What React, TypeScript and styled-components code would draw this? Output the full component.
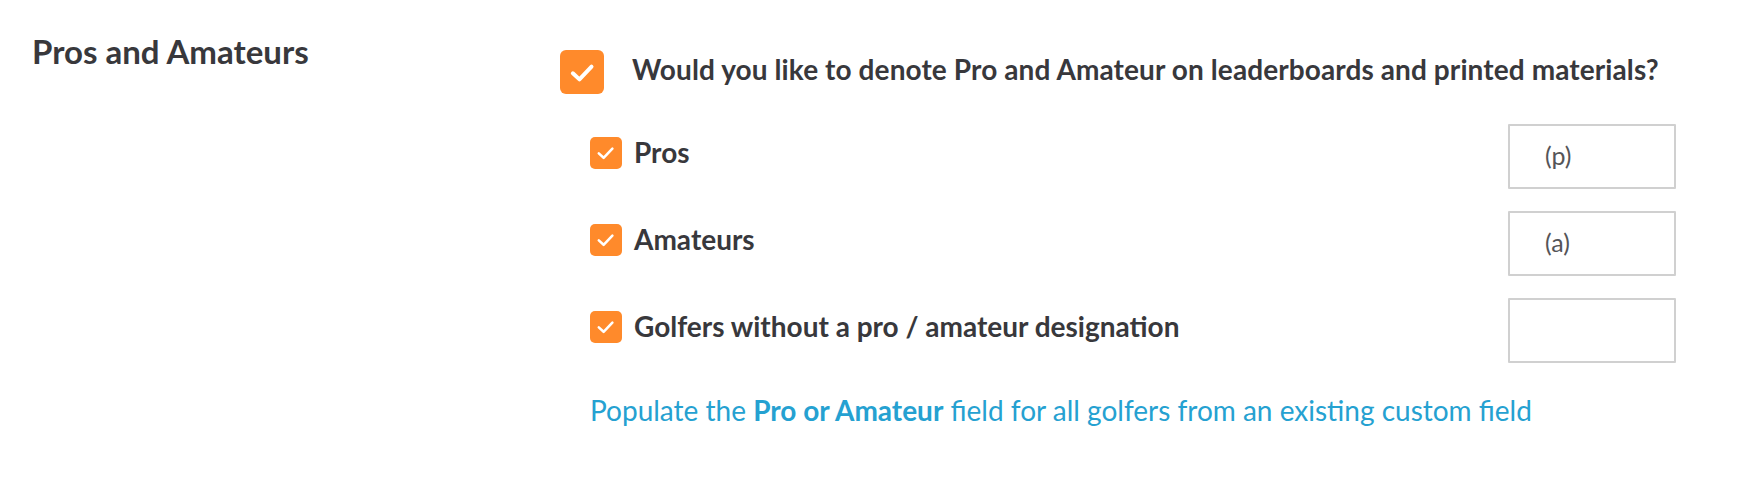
import React from "react"
import styled, { createGlobalStyle } from "styled-components"

const GlobalStyle = createGlobalStyle`
  body {
    margin: 0;
    background: #ffffff;
    font-family: Lato, "Liberation Sans", sans-serif;
    color: #38383c;
  }
`

const Section = styled.div`
  display: flex;
  padding: 24px 0 0 32px;
  width: 1744px;
  height: 484px;
  box-sizing: border-box;
`

const SideTitle = styled.h2`
  width: 528px;
  margin: 0;
  font-size: 33px;
  font-weight: 700;
  line-height: 54px;
`

const Content = styled.div`
  width: 1116px;
  display: flex;
  flex-direction: column;
`

const QuestionRow = styled.div`
  display: flex;
  align-items: center;
  gap: 28px;
  margin-top: 26px;
`

const QuestionText = styled.div`
  font-size: 28px;
  font-weight: 700;
  line-height: 34px;
  letter-spacing: 0.1px;
  margin-top: -7px;
`

const Options = styled.div`
  display: flex;
  flex-direction: column;
  gap: 22px;
  margin-top: 30px;
  padding-left: 30px;
`

const OptionRow = styled.div`
  display: flex;
  align-items: center;
  height: 65px;
`

const OptionLabel = styled.div`
  flex: 1;
  margin-left: 12px;
  font-size: 28px;
  font-weight: 700;
  line-height: 34px;
  margin-top: -10px;
`

const Box = styled.span<{ size: number }>`
  width: ${({ size }) => size}px;
  height: ${({ size }) => size}px;
  border-radius: ${({ size }) => (size > 40 ? 6 : 5)}px;
  background: #ff8a2b;
  display: flex;
  align-items: center;
  justify-content: center;
  flex-shrink: 0;
  margin-top: ${({ size }) => (size > 40 ? 0 : -8)}px;
`

const AbbrevInput = styled.input`
  width: 168px;
  height: 65px;
  box-sizing: border-box;
  border: 2px solid #d0d0d0;
  border-radius: 1px;
  padding: 0 0 4px 35px;
  font-family: Lato, "Liberation Sans", sans-serif;
  font-size: 25px;
  color: #555558;
  background: #fff;
  outline: none;
`

const PopulateLink = styled.a`
  display: block;
  margin-top: 30px;
  padding-left: 30px;
  font-size: 28px;
  line-height: 34px;
  color: #25a1d1;
  text-decoration: none;
  cursor: pointer;

  strong {
    font-weight: 700;
  }
`

const Check: React.FC<{ size: number }> = ({ size }) => (
  <Box size={size}>
    <svg
      width={size * 0.6}
      height={size * 0.6}
      viewBox="0 0 24 24"
      fill="none"
      stroke="#ffffff"
      strokeWidth={size > 40 ? 3.6 : 3.2}
      strokeLinecap="round"
      strokeLinejoin="round"
    >
      <path d="M3.5 13 L9.5 18.5 L20.5 7" />
    </svg>
  </Box>
)

const options = [
  { label: "Pros", value: "(p)" },
  { label: "Amateurs", value: "(a)" },
  { label: "Golfers without a pro / amateur designation", value: "" },
]

export default function App() {
  return (
    <>
      <GlobalStyle />
      <Section>
        <SideTitle>Pros and Amateurs</SideTitle>
        <Content>
          <QuestionRow>
            <Check size={44} />
            <QuestionText>
              Would you like to denote Pro and Amateur on leaderboards and printed materials?
            </QuestionText>
          </QuestionRow>
          <Options>
            {options.map((o) => (
              <OptionRow key={o.label}>
                <Check size={32} />
                <OptionLabel>{o.label}</OptionLabel>
                <AbbrevInput defaultValue={o.value} />
              </OptionRow>
            ))}
          </Options>
          <PopulateLink>
            Populate the <strong>Pro or Amateur</strong> field for all golfers from an existing custom field
          </PopulateLink>
        </Content>
      </Section>
    </>
  )
}
